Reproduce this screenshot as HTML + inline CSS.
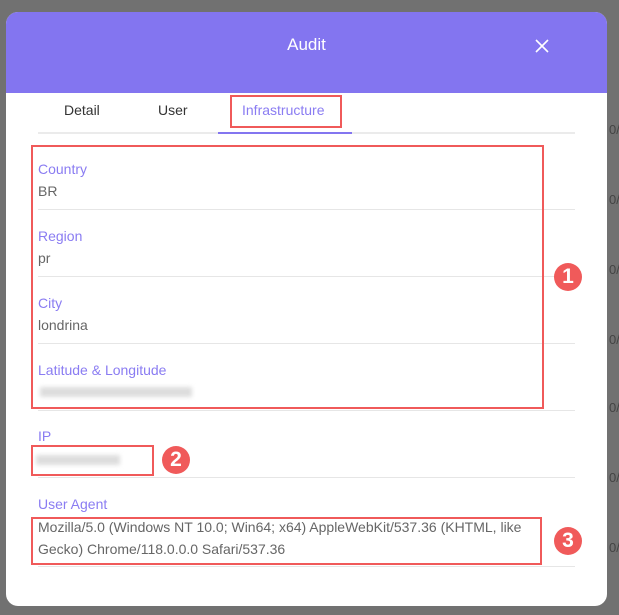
<!DOCTYPE html><html><head><style>
body{margin:0;width:619px;height:615px;background:#6e6e6e;position:relative;overflow:hidden;font-family:"Liberation Sans",sans-serif}
.bg{position:absolute;left:0;top:0;width:619px;height:615px;background:#717171}
.m{position:absolute;left:6px;top:12px;width:601px;height:594px;background:#fff;border-radius:12px;overflow:hidden}
.h{height:81px;background:#8375f0;color:#fff;text-align:center;font-size:17px;line-height:66px}
.a{position:absolute;font-size:14px}
.l{color:#8a7cf2}.v{color:#666}
.sep{position:absolute;left:38px;width:537px;height:1px;background:#e6e6e6}
.box{position:absolute;border:2px solid #f05a5a;box-sizing:border-box}
.c{position:absolute;width:28px;height:28px;border-radius:50%;background:#f05a5a;color:#fff;font-weight:bold;font-size:21px;text-align:center;line-height:28px}
.blur{position:absolute;height:10px;background:#ddd;filter:blur(2px)}
.r{position:absolute;left:609px;color:#444;font-size:13px}
</style></head><body><div class="bg"></div>
<div class="r" style="top:122px">0/</div><div class="r" style="top:192px">0/</div><div class="r" style="top:262px">0/</div><div class="r" style="top:332px">0/</div><div class="r" style="top:400px">0/</div><div class="r" style="top:470px">0/</div><div class="r" style="top:540px">0/</div>
<div class="m"><div class="h">Audit</div>
<svg style="position:absolute;left:529px;top:27px" width="14" height="14"><path d="M1 1L13 13M13 1L1 13" stroke="#fff" stroke-width="1.6"/></svg></div>
<div class="a" style="left:64px;top:102px;color:#333">Detail</div>
<div class="a" style="left:158px;top:102px;color:#333">User</div>
<div class="a l" style="left:242px;top:102px">Infrastructure</div>
<div class="sep" style="top:132px;height:2px;background:#ebebeb"></div>
<div style="position:absolute;left:218px;top:132px;width:134px;height:2px;background:#8375f0"></div>
<div class="box" style="left:230px;top:95px;width:112px;height:33px"></div>
<div class="a l" style="left:38px;top:161px">Country</div><div class="a v" style="left:38px;top:183px">BR</div><div class="sep" style="top:209px"></div>
<div class="a l" style="left:38px;top:228px">Region</div><div class="a v" style="left:38px;top:250px">pr</div><div class="sep" style="top:276px"></div>
<div class="a l" style="left:38px;top:295px">City</div><div class="a v" style="left:38px;top:317px">londrina</div><div class="sep" style="top:343px"></div>
<div class="a l" style="left:38px;top:362px">Latitude &amp; Longitude</div><div class="blur" style="left:40px;top:387px;width:152px"></div><div class="sep" style="top:410px"></div>
<div class="a l" style="left:38px;top:428px">IP</div><div class="blur" style="left:36px;top:455px;width:84px"></div><div class="sep" style="top:477px"></div>
<div class="a l" style="left:38px;top:496px">User Agent</div>
<div class="a v" style="left:38px;top:516px;line-height:22px;width:520px;white-space:nowrap">Mozilla/5.0 (Windows NT 10.0; Win64; x64) AppleWebKit/537.36 (KHTML, like<br>Gecko) Chrome/118.0.0.0 Safari/537.36</div>
<div class="sep" style="top:566px;left:38px"></div>
<div class="box" style="left:31px;top:145px;width:513px;height:264px"></div>
<div class="box" style="left:31px;top:445px;width:123px;height:31px"></div>
<div class="box" style="left:31px;top:517px;width:511px;height:48px"></div>
<div class="c" style="left:554px;top:263px">1</div>
<div class="c" style="left:162px;top:446px">2</div>
<div class="c" style="left:554px;top:527px">3</div>
</body></html>
